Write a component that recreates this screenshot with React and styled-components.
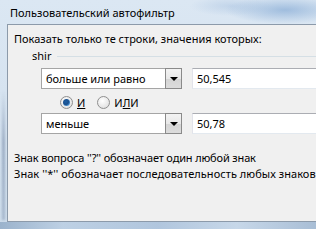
import React from "react";
import styled, { createGlobalStyle } from "styled-components";

const Global = createGlobalStyle`
  html, body { margin: 0; padding: 0; }
  body { width: 316px; height: 229px; overflow: hidden; font-family: "Noto Sans", "Segoe UI", sans-serif; }
`;

const Window = styled.div`
  width: 316px;
  height: 229px;
  display: flex;
  flex-direction: column;
  background:
    radial-gradient(ellipse 60px 14px at 285px 10px, rgba(140,175,215,0.75), transparent),
    radial-gradient(ellipse 40px 10px at 230px 6px, rgba(170,195,225,0.5), transparent),
    linear-gradient(180deg, #dbe7f3 0%, #d6e3f0 40%, #cddceb 100%);
  overflow: hidden;
  position: relative;
`;

const LeftEdge = styled.div`
  position: absolute;
  left: 2px;
  top: 90px;
  width: 3px;
  height: 130px;
  background: linear-gradient(180deg, rgba(120,140,170,0), rgba(110,130,160,0.55) 40%, rgba(110,130,160,0.4));
  filter: blur(1px);
`;

const TitleBar = styled.div`
  height: 24px;
  flex: none;
  display: flex;
  align-items: center;
  padding-left: 10px;
  font-size: 11px;
  color: #000;
`;

const Panel = styled.div`
  flex: 1;
  margin-left: 7px;
  margin-bottom: 7px;
  border: 1px solid #8c9aaa;
  border-right: none;
  background: #f0f0f0;
  padding: 6px 0 0 6px;
  display: flex;
  flex-direction: column;
  font-size: 11px;
  color: #000;
`;

const BottomEdge = styled.div`
  position: absolute;
  left: 0;
  right: 0;
  bottom: 0;
  height: 7px;
  background: linear-gradient(90deg, #8ea8c4 0%, #b9cde2 20%, #a9c0da 50%, #c5d6e8 75%, #9fb6d0 100%);
  opacity: 0.8;
`;

const Heading = styled.div`
  line-height: 16px;
  white-space: nowrap;
`;

const GroupLabel = styled.div`
  display: flex;
  align-items: center;
  margin-left: 18px;
  line-height: 16px;
  margin-top: 1px;
  &::after {
    content: "";
    flex: 1;
    height: 1px;
    background: #d5dfe5;
    margin-left: 6px;
  }
`;

const Row = styled.div`
  display: flex;
  align-items: center;
  margin-left: 27px;
  margin-top: ${(p) => p.$top}px;
  gap: 10px;
`;

const Combo = styled.div`
  width: 141px;
  height: 21px;
  box-sizing: border-box;
  border: 1px solid #a5a5a5;
  background: #fff;
  display: flex;
  align-items: stretch;
  padding-left: 4px;
`;

const ComboText = styled.div`
  flex: 1;
  display: flex;
  align-items: center;
  white-space: nowrap;
`;

const DropButton = styled.div`
  width: 17px;
  box-sizing: border-box;
  border: 1px solid #8a8a8a;
  margin: -1px -1px -1px 0;
  background: linear-gradient(180deg, #f3f3f3 0%, #e8e8e8 50%, #d4d4d4 51%, #dcdcdc 100%);
  display: flex;
  align-items: center;
  justify-content: center;
`;

const Arrow = styled.div`
  width: 0;
  height: 0;
  border-left: 4px solid transparent;
  border-right: 4px solid transparent;
  border-top: 4px solid #000;
  margin-top: 1px;
`;

const TextField = styled.div`
  flex: 1;
  height: 21px;
  box-sizing: border-box;
  border: 1px solid #abadb3;
  border-right: none;
  border-color: #abadb3 #e3e9ef #e3e9ef #e2e3ea;
  background: #fff;
  display: flex;
  align-items: center;
  padding-left: 4px;
`;

const RadioRow = styled.div`
  display: flex;
  align-items: center;
  margin-left: 46px;
  margin-top: 3px;
  height: 20px;
`;

const RadioItem = styled.label`
  display: flex;
  align-items: center;
  gap: 4px;
  margin-right: ${(p) => p.$gap}px;
`;

const RadioCircle = styled.span`
  width: 13px;
  height: 13px;
  box-sizing: border-box;
  border-radius: 50%;
  border: 1px solid #8f8f8f;
  background: radial-gradient(circle at 40% 35%, #ffffff, #e4e4e4 70%, #d2d2d2);
  display: flex;
  align-items: center;
  justify-content: center;
  &::after {
    content: "";
    display: ${(p) => (p.$checked ? "block" : "none")};
    width: 7px;
    height: 7px;
    border-radius: 50%;
    background: radial-gradient(circle at 40% 40%, #1b5fa6 0%, #1a4f8c 45%, #4d9be0 75%, #8cc4f2 100%);
  }
`;

const U = styled.span`
  text-decoration: underline;
`;

const Help = styled.div`
  margin-top: ${(p) => p.$top}px;
  line-height: 16px;
  white-space: nowrap;
  letter-spacing: ${(p) => p.$spacing || 0}px;
`;

export default function App() {
  return (
    <>
      <Global />
      <Window>
        <LeftEdge />
        <TitleBar>Пользовательский автофильтр</TitleBar>
        <Panel>
          <Heading>Показать только те строки, значения которых:</Heading>
          <GroupLabel>shir</GroupLabel>
          <Row $top={4}>
            <Combo>
              <ComboText>больше или равно</ComboText>
              <DropButton><Arrow /></DropButton>
            </Combo>
            <TextField>50,545</TextField>
          </Row>
          <RadioRow>
            <RadioItem $gap={12}>
              <RadioCircle $checked />
              <U>И</U>
            </RadioItem>
            <RadioItem $gap={0}>
              <RadioCircle />
              <span>И<U>Л</U>И</span>
            </RadioItem>
          </RadioRow>
          <Row $top={1}>
            <Combo>
              <ComboText>меньше</ComboText>
              <DropButton><Arrow /></DropButton>
            </Combo>
            <TextField>50,78</TextField>
          </Row>
          <Help $top={16} $spacing={-0.15}>Знак вопроса ''?'' обозначает один любой знак</Help>
          <Help $top={0} $spacing={0.05}>Знак ''*'' обозначает последовательность любых знаков</Help>
        </Panel>
        <BottomEdge />
      </Window>
    </>
  );
}
